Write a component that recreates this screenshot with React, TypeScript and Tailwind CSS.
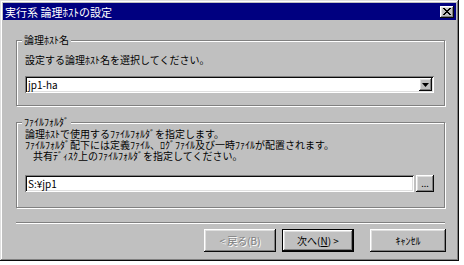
import React from "react";

const raised =
  "shadow-[inset_-1px_-1px_#0a0a0a,inset_1px_1px_#ffffff,inset_-2px_-2px_#808080,inset_2px_2px_#dfdfdf]";
const sunken =
  "shadow-[inset_1px_1px_#808080,inset_-1px_-1px_#ffffff,inset_2px_2px_#0a0a0a,inset_-2px_-2px_#dfdfdf]";

function GroupBox({
  label,
  className,
  children,
}: {
  label: string;
  className?: string;
  children: React.ReactNode;
}) {
  return (
    <div
      className={
        "relative border border-[#808080] shadow-[inset_1px_1px_#ffffff,1px_1px_#ffffff] " +
        (className ?? "")
      }
    >
      <span className="absolute left-[5px] top-[-8px] bg-[#c0c0c0] px-[2px] leading-[14px]">
        {label}
      </span>
      {children}
    </div>
  );
}

export default function App() {
  return (
    <div className="w-[464px] h-[265px] bg-white font-['Noto_Sans_CJK_JP',sans-serif] text-[10px] text-black">
      <div
        className={
          "w-[459px] h-[261px] bg-[#c0c0c0] p-[3px] flex flex-col " +
          "shadow-[inset_-1px_-1px_#0a0a0a,inset_1px_1px_#dfdfdf,inset_-2px_-2px_#808080,inset_2px_2px_#ffffff]"
        }
      >
        {/* Title bar */}
        <div className="h-[17px] bg-[#000080] flex items-center justify-between pl-[2px] pr-[2px]">
          <span className="text-white text-[11px] leading-[14px]">
            実行系 論理ﾎｽﾄの設定
          </span>
          <div
            className={
              "w-[14px] h-[12px] bg-[#c0c0c0] flex items-center justify-center " +
              raised
            }
          >
            <svg width="8" height="7" viewBox="0 0 8 7">
              <path
                d="M0 0h2v1h1v1h2V1h1V0h2v1H7v1H6v1H5v1h1v1h1v1h1v1H6V6H5V5H3v1H2v1H0V6h1V5h1V4h1V3H2V2H1V1H0z"
                fill="#000"
              />
            </svg>
          </div>
        </div>

        <div className="ml-[13px] w-[429px] flex flex-col">
          {/* Group 1 */}
          <GroupBox label="論理ﾎｽﾄ名" className="mt-[20px] h-[66px] pl-[8px] pt-[12px]">
            <div className="leading-[13px]">設定する論理ﾎｽﾄ名を選択してください。</div>
            <div
              className={
                "mt-[10px] w-[409px] h-[17px] bg-white flex items-center justify-between pl-[3px] pr-[2px] " +
                sunken
              }
            >
              <span className="leading-[13px]">jp1-ha</span>
              <div
                className={
                  "w-[13px] h-[13px] bg-[#c0c0c0] flex items-center justify-center " +
                  raised
                }
              >
                <svg width="7" height="4" viewBox="0 0 7 4">
                  <path d="M0 0h7L3.5 4z" fill="#000" />
                </svg>
              </div>
            </div>
          </GroupBox>

          {/* Group 2 */}
          <GroupBox label="ﾌｧｲﾙﾌｫﾙﾀﾞ" className="mt-[16px] h-[86px] pl-[8px] pt-[5px]">
            <div className="leading-[11px]">
              <div>論理ﾎｽﾄで使用するﾌｧｲﾙﾌｫﾙﾀﾞを指定します。</div>
              <div>ﾌｧｲﾙﾌｫﾙﾀﾞ配下には定義ﾌｧｲﾙ、ﾛｸﾞﾌｧｲﾙ及び一時ﾌｧｲﾙが配置されます。</div>
              <div className="pl-[8px]">共有ﾃﾞｨｽｸ上のﾌｧｲﾙﾌｫﾙﾀﾞを指定してください。</div>
            </div>
            <div className="mt-[14px] flex items-center gap-[2px]">
              <div
                className={
                  "w-[389px] h-[17px] bg-white flex items-center pl-[3px] " + sunken
                }
              >
                <span className="leading-[13px]">S:¥jp1</span>
              </div>
              <div
                className={
                  "w-[18px] h-[17px] bg-[#c0c0c0] flex items-end justify-center pb-[4px] leading-none " +
                  raised
                }
              >
                <span className="text-[9px] leading-none">...</span>
              </div>
            </div>
          </GroupBox>

          {/* Separator */}
          <div className="mt-[14px] h-[2px] border-t border-[#808080] border-b border-b-white" />

          {/* Buttons */}
          <div className="mt-[5px] flex justify-end">
            <div
              className={
                "w-[72px] h-[23px] bg-[#c0c0c0] flex items-center justify-center text-[#808080] [text-shadow:1px_1px_#ffffff] " +
                raised
              }
            >
              &lt; 戻る(B)
            </div>
            <div className="ml-[6px] w-[72px] h-[23px] border border-black flex">
              <div
                className={
                  "flex-1 bg-[#c0c0c0] flex items-center justify-center " + raised
                }
              >
                次へ(<span className="underline">N</span>) &gt;
              </div>
            </div>
            <div
              className={
                "ml-[16px] mr-[-1px] w-[76px] h-[23px] bg-[#c0c0c0] flex items-center justify-center " +
                raised
              }
            >
              ｷｬﾝｾﾙ
            </div>
          </div>
        </div>
      </div>
    </div>
  );
}
